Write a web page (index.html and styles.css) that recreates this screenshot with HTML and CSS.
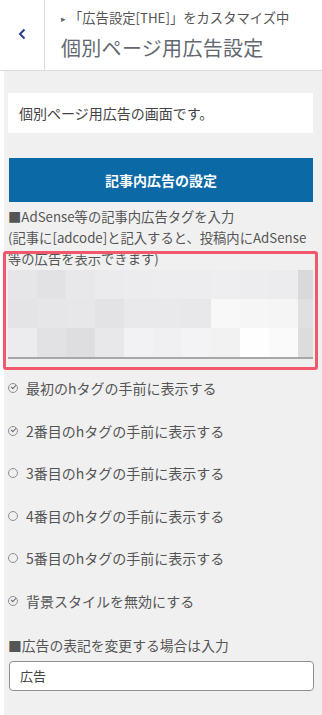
FILE: index.html
```html
<!DOCTYPE html>
<html lang="ja">
<head>
    <meta charset="UTF-8">
    <meta name="viewport" content="width=device-width, initial-scale=1.0">
    <title>個別ページ用広告設定</title>
    <link rel="stylesheet" href="styles.css">
</head>
<body>
    <header class="pane-head">
        <button class="back" type="button" aria-label="戻る">
            <svg width="10" height="12" viewBox="0 0 10 12"><path d="M7.5 1.5 L3 6 L7.5 10.5" fill="none" stroke="#2b3d8f" stroke-width="2"/></svg>
        </button>
        <div class="head-title">
            <span class="crumb"><span class="tri">&#9656;</span>「広告設定[THE]」をカスタマイズ中</span>
            <h1>個別ページ用広告設定</h1>
        </div>
    </header>

    <main class="pane">
        <p class="desc">個別ページ用広告の画面です。</p>

        <h2 class="section-btn">記事内広告の設定</h2>

        <div class="field-ad">
            <p class="label">■AdSense等の記事内広告タグを入力<br>(記事に[adcode]と記入すると、投稿内にAdSense<br>等の広告を表示できます)</p>
            <div class="mosaic">
                <i style="background:#e6e6e8"></i><i style="background:#e2e2e4"></i><i style="background:#e8e8ea"></i><i style="background:#ebebed"></i><i style="background:#ececee"></i><i style="background:#ededef"></i><i style="background:#ededef"></i><i style="background:#eeeef0"></i><i style="background:#ededef"></i><i style="background:#ececee"></i><i style="background:#d9d9db"></i>
                <i style="background:#e4e4e6"></i><i style="background:#e6e6e8"></i><i style="background:#e7e7e9"></i><i style="background:#e3e3e5"></i><i style="background:#e9e9eb"></i><i style="background:#e9e9eb"></i><i style="background:#e8e8ea"></i><i style="background:#f8f8f9"></i><i style="background:#f6f6f7"></i><i style="background:#f5f5f6"></i><i style="background:#e0e0e2"></i>
                <i style="background:#ececee"></i><i style="background:#e2e2e4"></i><i style="background:#dedee0"></i><i style="background:#e8e8ea"></i><i style="background:#f2f2f4"></i><i style="background:#f0f0f2"></i><i style="background:#f3f3f5"></i><i style="background:#f2f2f3"></i><i style="background:#fefefe"></i><i style="background:#fafafa"></i><i style="background:#dcdcdd"></i>
            </div>
            <div class="redact"></div>
        </div>

        <ul class="checks">
            <li><span class="ico on"></span>最初のhタグの手前に表示する</li>
            <li><span class="ico on"></span>2番目のhタグの手前に表示する</li>
            <li><span class="ico"></span>3番目のhタグの手前に表示する</li>
            <li><span class="ico"></span>4番目のhタグの手前に表示する</li>
            <li><span class="ico"></span>5番目のhタグの手前に表示する</li>
            <li><span class="ico on"></span>背景スタイルを無効にする</li>
        </ul>

        <label class="label label-text" for="ad_label">■広告の表記を変更する場合は入力</label>
        <input class="text-input" type="text" id="ad_label" value="広告">
    </main>
</body>
</html>
```

FILE: styles.css
```css
/* カスタマイザー パネル */
body {
    margin: 0;
    width: 322px;
    min-height: 715px;
    background: #fff;
    font-family: "Noto Sans CJK JP", "Noto Sans", sans-serif;
    color: #555;
}

.pane-head {
    display: flex;
    height: 70px;
    background: #fff;
    border-bottom: 1px solid #dcdcde;
}

.back {
    width: 45px;
    padding: 0 0 2px;
    border: 0;
    border-right: 1px solid #dcdcde;
    background: #fff;
    display: flex;
    align-items: center;
    justify-content: center;
}

.head-title {
    padding: 8px 0 0 16px;
    display: flex;
    flex-direction: column;
}

.crumb {
    font-size: 13.3px;
    line-height: 20px;
    color: #555;
    white-space: nowrap;
}

.tri {
    font-size: 9px;
    color: #646970;
    margin-right: 3px;
    vertical-align: 1px;
}

.head-title h1 {
    margin: 0;
    font-size: 20px;
    font-weight: 400;
    line-height: 38px;
    color: #646970;
    letter-spacing: 0.3px;
}

.pane {
    min-height: 644px;
    margin-left: 4px;
    padding: 22px 9px 1px 4px;
    background: #f0f0f1;
}

.desc {
    margin: 0;
    height: 40px;
    padding-left: 11px;
    background: #fff;
    font-size: 14px;
    line-height: 40px;
    color: #444;
}

.section-btn {
    margin: 25px 0 0 1px;
    height: 44px;
    background: #0b6aa6;
    color: #fff;
    font-size: 14px;
    font-weight: 700;
    line-height: 44px;
    text-align: center;
}

.field-ad {
    position: relative;
    padding-top: 4px;
}

.label {
    margin: 0;
    font-size: 13.3px;
    line-height: 21px;
    color: #555;
    white-space: nowrap;
}

.mosaic {
    display: grid;
    grid-template-columns: repeat(10, 29px) 15px;
    grid-auto-rows: 29px;
    margin-top: 1px;
    border-bottom: 2px solid #a7a7a9;
}

.mosaic i {
    display: block;
}

/* 赤枠の注記 */
.redact {
    position: absolute;
    top: 49px;
    left: -5px;
    width: 309px;
    height: 113px;
    border: 3px solid #f2586c;
    border-radius: 3px;
}

.checks {
    list-style: none;
    margin: 19px 0 0;
    padding: 0;
    display: flex;
    flex-direction: column;
    gap: 22.6px;
}

.checks li {
    display: flex;
    align-items: center;
    height: 20px;
    font-size: 14px;
    color: #555;
}

.ico {
    position: relative;
    width: 8px;
    height: 8px;
    margin-right: 8px;
    border: 1px solid #8c8f94;
    border-radius: 50%;
}

.ico.on::after {
    content: "";
    position: absolute;
    left: 2px;
    top: 1px;
    width: 4px;
    height: 2px;
    border-left: 1px solid #646970;
    border-bottom: 1px solid #646970;
    transform: rotate(-45deg);
}

.label-text {
    display: block;
    margin-top: 24.5px;
    font-size: 13.8px;
}

.text-input {
    display: block;
    box-sizing: border-box;
    width: 305px;
    height: 30px;
    margin: 4.5px 0 0 1px;
    padding: 0 10px;
    border: 1px solid #8c8f94;
    border-radius: 4px;
    background: #fff;
    font-family: inherit;
    font-size: 13px;
    color: #444;
}
```
